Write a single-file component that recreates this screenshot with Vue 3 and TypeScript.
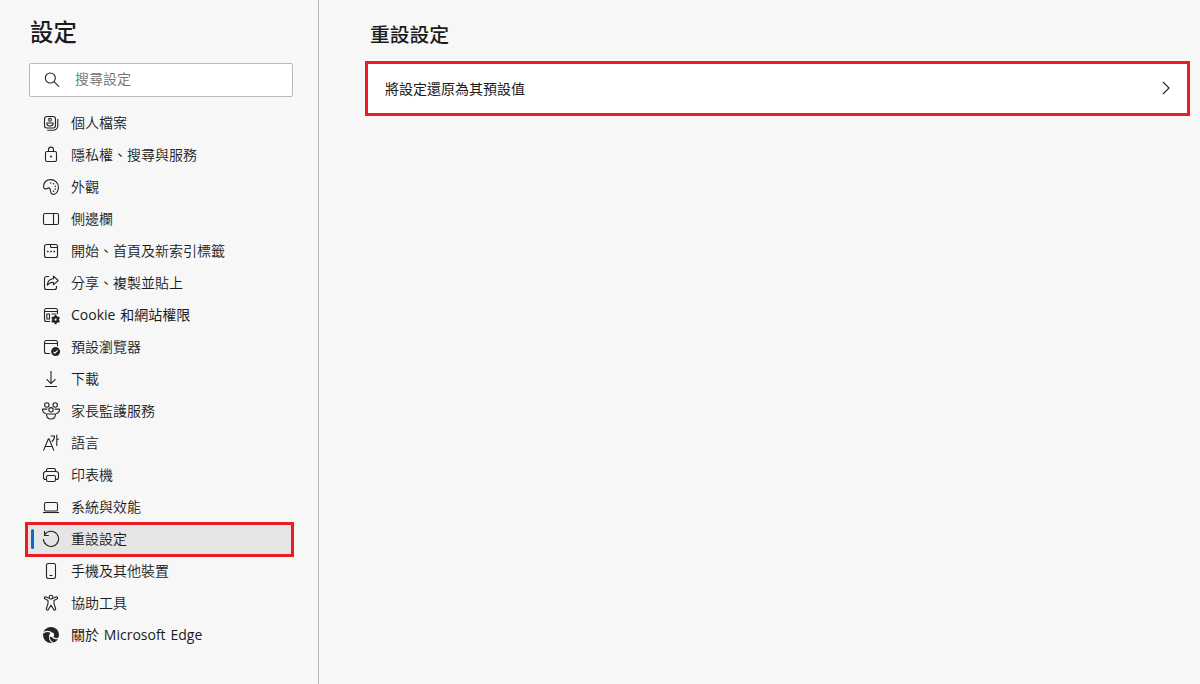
<script setup lang="ts">
import { ref } from 'vue'

interface NavItem {
  id: string
  label: string
  latin?: boolean
}

const items: NavItem[] = [
  { id: 'profile', label: '個人檔案' },
  { id: 'privacy', label: '隱私權、搜尋與服務' },
  { id: 'appearance', label: '外觀' },
  { id: 'sidebar', label: '側邊欄' },
  { id: 'start', label: '開始、首頁及新索引標籤' },
  { id: 'share', label: '分享、複製並貼上' },
  { id: 'cookie', label: 'Cookie 和網站權限', latin: true },
  { id: 'browser', label: '預設瀏覽器' },
  { id: 'download', label: '下載' },
  { id: 'family', label: '家長監護服務' },
  { id: 'language', label: '語言' },
  { id: 'printer', label: '印表機' },
  { id: 'system', label: '系統與效能' },
  { id: 'reset', label: '重設設定' },
  { id: 'phone', label: '手機及其他裝置' },
  { id: 'accessibility', label: '協助工具' },
  { id: 'about', label: '關於 Microsoft Edge', latin: true },
]

const active = ref('reset')
const search = ref('')
</script>

<template>
  <div class="settings">
    <aside class="sidebar">
      <h1 class="title">設定</h1>
      <label class="search">
        <svg class="search-icon" viewBox="0 0 20 20">
          <circle cx="8.3" cy="8" r="5" />
          <path d="M12 11.7l5 5" />
        </svg>
        <input v-model="search" type="text" placeholder="搜尋設定" />
      </label>

      <nav class="nav">
        <a
          v-for="item in items"
          :key="item.id"
          class="nav-item"
          :class="{ active: item.id === active }"
          @click="active = item.id"
        >
          <svg class="icon" viewBox="0 0 20 20">
            <g v-if="item.id === 'profile'">
              <rect x="3.5" y="3.5" width="11" height="11.5" rx="2.5" />
              <circle cx="9" cy="6.8" r="1.4" />
              <path d="M5.8 10h6.4c0 2-1.2 3-3.2 3s-3.2-1-3.2-3z" />
              <path d="M16.8 6v6.9a4.3 4.3 0 0 1-4.3 4.3H6.3" />
            </g>
            <g v-else-if="item.id === 'privacy'">
              <rect x="4.5" y="6.5" width="11" height="10" rx="1.5" />
              <path d="M7.5 6.5V4.6a2.5 2.5 0 0 1 5 0v1.9" />
              <circle class="solid" cx="10" cy="11.5" r="1" />
            </g>
            <g v-else-if="item.id === 'appearance'">
              <path d="M2.6 8.7C3.1 5 6 2.6 9.6 2.6c4.5 0 7.8 3.3 7.8 7.6 0 3.9-2 7.2-4.9 7.2-2.2 0-2.8-1.9-3-3.4-.2-1.9-.6-3.1-1.8-3.1-1.4 0-1.8 1-3.2 1-1.5 0-2.1-1.4-1.9-3.2z" />
              <circle class="solid" cx="9.6" cy="6" r=".8" />
              <circle class="solid" cx="12.5" cy="6.8" r=".8" />
              <circle class="solid" cx="14.3" cy="9.2" r=".8" />
              <circle class="solid" cx="14.2" cy="12" r=".8" />
              <circle class="solid" cx="12.5" cy="14.2" r=".8" />
            </g>
            <g v-else-if="item.id === 'sidebar'">
              <rect x="2.5" y="4.5" width="15" height="11" rx="1.5" />
              <path d="M12.5 4.5v11" />
            </g>
            <g v-else-if="item.id === 'start'">
              <rect x="3.5" y="3.5" width="13" height="13" rx="2" />
              <path d="M9.5 3.5v2a1 1 0 0 0 1 1h6" />
              <path class="dots" d="M6 10.5h1.6M9.2 10.5h1.6M12.4 10.5H14" />
            </g>
            <g v-else-if="item.id === 'share'">
              <path d="M8 3.5H5.5a2 2 0 0 0-2 2v9a2 2 0 0 0 2 2h8a2 2 0 0 0 2-2V13" />
              <path d="M12.4 3.2v2.6c-3.5.2-5.7 2.3-6.2 6.3 1.7-2 3.5-2.9 6.2-2.9v2.6l4.8-4.3z" />
            </g>
            <g v-else-if="item.id === 'cookie'">
              <path d="M9 16.5H5.5a2 2 0 0 1-2-2v-9a2 2 0 0 1 2-2h9a2 2 0 0 1 2 2V9M3.5 6.5h13" />
              <path d="M5.8 9h2.7v5H5.8zM10.5 9h5" />
              <circle class="gear" cx="14.6" cy="14.6" r="2.3" />
              <path class="teeth" d="M14.6 10v9.2M10.7 12.3l7.8 4.6M18.5 12.3l-7.8 4.6" />
              <circle class="hole" cx="14.6" cy="14.6" r="1.1" />
            </g>
            <g v-else-if="item.id === 'browser'">
              <path d="M9 16.5H5.5a2 2 0 0 1-2-2v-9a2 2 0 0 1 2-2h9a2 2 0 0 1 2 2V9M3.5 6.5h13" />
              <circle class="solid" cx="14.6" cy="14.6" r="4.5" />
              <path class="light" d="M12.5 14.8l1.4 1.3 2.8-2.8" />
            </g>
            <g v-else-if="item.id === 'download'">
              <path d="M10 2v12.5M5.5 10.2l4.5 4.5 4.5-4.5M4 17.5h12" />
            </g>
            <g v-else-if="item.id === 'family'">
              <circle cx="5.8" cy="4" r="2.2" />
              <circle cx="14.2" cy="4" r="2.2" />
              <circle cx="10" cy="8.8" r="2.2" />
              <path d="M5.5 13h9c0 3.2-1.6 5-4.5 5s-4.5-1.8-4.5-5z" />
              <path d="M6.3 8.1H1.5c0 2.4 1.1 4.2 3.3 4.6M13.7 8.1h4.8c0 2.4-1.1 4.2-3.3 4.6" />
            </g>
            <g v-else-if="item.id === 'language'">
              <path d="M2.5 17.6L7.4 5.8h.6l4.9 11.8M4.2 13.5h7" />
              <path d="M9.5 3h4c0 2.5-.8 4.4-2.7 5.7M15.8 1.8v11.3M15.8 6.3H18" />
            </g>
            <g v-else-if="item.id === 'printer'">
              <path d="M5.5 14.5h-1a2 2 0 0 1-2-2V9a2.5 2.5 0 0 1 2.5-2.5h10A2.5 2.5 0 0 1 17.5 9v3.5a2 2 0 0 1-2 2h-1" />
              <path d="M5.5 6.5V5a1.5 1.5 0 0 1 1.5-1.5h6A1.5 1.5 0 0 1 14.5 5v1.5" />
              <rect x="5.5" y="10.5" width="9" height="6" rx="1.5" />
            </g>
            <g v-else-if="item.id === 'system'">
              <rect x="3.5" y="5.5" width="13" height="8.5" rx="1.5" />
              <path d="M2 15.5h16" />
            </g>
            <g v-else-if="item.id === 'reset'">
              <path d="M3.8 5.4A7.6 7.6 0 1 1 2.4 10M3.5 2v4.5h4.3" />
            </g>
            <g v-else-if="item.id === 'phone'">
              <rect x="5.5" y="2.5" width="9" height="15" rx="1.7" />
              <path d="M8.5 14.5h3" />
            </g>
            <g v-else-if="item.id === 'accessibility'">
              <circle cx="10" cy="4.2" r="1.9" />
              <path d="M8.1 5.2L5 4c-1.6-.5-2.3 1.5-.8 2.1L7 7.4v3.2l-1.6 4.9c-.5 1.7 1.5 2.3 2.1.8L10 12.2l2.5 4.1c.6 1.5 2.6.9 2.1-.8L13 10.6V7.4l2.8-1.3c1.5-.6.8-2.6-.8-2.1l-3.1 1.2" />
            </g>
            <g v-else>
              <circle class="solid" cx="10" cy="10" r="8" />
              <circle class="hole" cx="10.9" cy="9.9" r="2.3" />
              <path class="light" d="M1.9 8.2C4.2 5.8 8.6 5.6 11 8.4" />
              <path class="light" d="M9.4 9.2c-2.4 3-.6 7.3 3.2 8.9" />
              <path class="light" d="M11.2 11.6c1.4 2 4.4 2.4 7 1.1" />
            </g>
          </svg>
          <span class="label" :class="{ latin: item.latin }">{{ item.label }}</span>
        </a>
      </nav>
    </aside>

    <main class="content">
      <h2 class="heading">重設設定</h2>
      <button class="card">
        <span>將設定還原為其預設值</span>
        <svg class="chevron" viewBox="0 0 16 16">
          <path d="M5 2l6 6-6 6" />
        </svg>
      </button>
    </main>
  </div>
</template>

<style>
body {
  margin: 0;
  background: #f7f7f7;
}
</style>

<style scoped>
.settings {
  display: flex;
  height: 684px;
  overflow: hidden;
  background: #f7f7f7;
  color: #1b1b1b;
  font-family: 'Open Sans', 'Noto Sans CJK TC', sans-serif;
  font-size: 14px;
}

.sidebar {
  box-sizing: border-box;
  width: 319px;
  flex-shrink: 0;
  padding: 14px 25px 0 29px;
  border-right: 1px solid #b8b8b8;
}

.title {
  margin: 0;
  height: 34px;
  line-height: 34px;
  padding-left: 1px;
  font-family: 'Noto Sans CJK TC', sans-serif;
  font-size: 23.4px;
  font-weight: 500;
}

.search {
  display: flex;
  align-items: center;
  box-sizing: border-box;
  height: 34px;
  width: 264px;
  margin-top: 15px;
  padding-left: 12px;
  gap: 13px;
  background: #fff;
  border: 1px solid #b9b9b9;
  border-radius: 2px;
}

.search input {
  flex: 1;
  min-width: 0;
  height: 28px;
  padding: 0 0 4px;
  border: 0;
  outline: 0;
  background: transparent;
  font-family: 'Noto Sans CJK TC', sans-serif;
  font-size: 14px;
  font-weight: 350;
  color: #1b1b1b;
}

.search input::placeholder {
  color: #707070;
}

svg {
  flex-shrink: 0;
  fill: none;
  stroke: #242424;
  stroke-width: 1.1;
  stroke-linejoin: round;
}

.search-icon,
.icon {
  width: 20px;
  height: 20px;
}

.nav {
  margin-top: 10px;
}

.nav-item {
  position: relative;
  display: flex;
  align-items: center;
  height: 32px;
  padding-left: 12px;
  gap: 10px;
  cursor: pointer;
  white-space: nowrap;
}

.label {
  line-height: 20px;
  font-weight: 350;
}

.label.latin {
  font-weight: 400;
  word-spacing: 1.2px;
}

/* frame sits around the row without moving its neighbours */
.nav-item.active::before {
  content: '';
  position: absolute;
  box-sizing: border-box;
  top: -1px;
  bottom: -2px;
  left: -4px;
  right: -1px;
  background: #e5e5e5;
  border: 3px solid #ed1c24;
}

.nav-item.active::after {
  content: '';
  position: absolute;
  left: 2px;
  top: 6px;
  width: 3px;
  height: 20px;
  border-radius: 2px;
  background: #0f6cbd;
}

.nav-item.active .icon,
.nav-item.active .label {
  position: relative;
  z-index: 1;
}

.solid {
  fill: #242424;
  stroke: none;
}

.dots {
  stroke-width: 1.6;
}

.light {
  stroke: #f7f7f7;
}

.gear {
  stroke-width: 2.4;
}

.teeth {
  stroke-width: 2;
}

.hole {
  fill: #f7f7f7;
  stroke: none;
}

.content {
  flex: 1;
  padding: 20px 10px 0 46px;
}

.heading {
  margin: 0;
  height: 28px;
  line-height: 28px;
  padding-left: 5px;
  font-family: 'Noto Sans CJK TC', sans-serif;
  font-size: 19.8px;
  font-weight: 500;
}

.card {
  display: flex;
  align-items: center;
  justify-content: space-between;
  box-sizing: border-box;
  width: 100%;
  height: 55px;
  margin-top: 13px;
  padding: 0 13px 2px 17px;
  background: #fff;
  border: 3px solid #ed1c24;
  color: #1b1b1b;
  font-family: 'Noto Sans CJK TC', sans-serif;
  font-size: 14px;
  font-weight: 400;
  cursor: pointer;
}

.chevron {
  width: 16px;
  height: 16px;
}
</style>
